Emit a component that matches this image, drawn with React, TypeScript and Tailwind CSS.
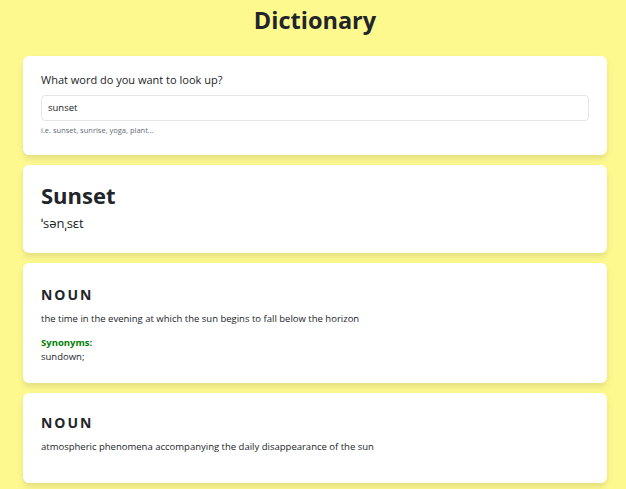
export default function App() {
  return (
    <div
      className="min-h-[489px] bg-[#fef98f] text-[#212529] pl-[23px] pr-[19px] pb-4"
      style={{ fontFamily: '"Open Sans", "Noto Sans", sans-serif' }}
    >
      <h1 className="text-center text-[23.5px] font-bold leading-[40px] mb-[16px]">Dictionary</h1>

      <div className="flex flex-col gap-[10px]">
        {/* Search */}
        <div className="bg-white rounded-md shadow-[0_4px_6px_rgba(0,0,0,0.1)] px-[18px] pt-[16px] pb-[19px]">
          <p className="text-[11px] leading-[16px] mb-[7px]">What word do you want to look up?</p>
          <div className="h-[26px] border border-[#e6e6e6] rounded-[4px] flex items-center px-[6px] text-[9.5px]">
            sunset
          </div>
          <p className="text-[7.5px] text-[#5f6b76] mt-[3px] leading-[12px]">i.e. sunset, sunrise, yoga, plant...</p>
        </div>

        {/* Word */}
        <div className="bg-white rounded-md shadow-[0_4px_6px_rgba(0,0,0,0.1)] px-[18px] pt-[16px] pb-[22px]">
          <h2 className="text-[22px] font-bold leading-[28px]">Sunset</h2>
          <p className="text-[13px] leading-[16px] mt-[6px]">ˈsənˌsɛt</p>
        </div>

        {/* Meaning 1 */}
        <div className="bg-white rounded-md shadow-[0_4px_6px_rgba(0,0,0,0.1)] px-[18px] pt-[22px] pb-[19px]">
          <h3 className="text-[14px] font-bold tracking-[0.14em] leading-[20px] mb-[7px]">NOUN</h3>
          <p className="text-[9.5px] leading-[14px]">the time in the evening at which the sun begins to fall below the horizon</p>
          <p className="text-[9.5px] font-bold text-[#008000] leading-[14px] mt-[10px]">Synonyms:</p>
          <p className="text-[9.5px] leading-[14px]">sundown;</p>
        </div>

        {/* Meaning 2 */}
        <div className="bg-white rounded-md shadow-[0_4px_6px_rgba(0,0,0,0.1)] px-[18px] pt-[20px] pb-[29px]">
          <h3 className="text-[14px] font-bold tracking-[0.14em] leading-[20px] mb-[7px]">NOUN</h3>
          <p className="text-[9.5px] leading-[14px]">atmospheric phenomena accompanying the daily disappearance of the sun</p>
        </div>
      </div>
    </div>
  );
}
